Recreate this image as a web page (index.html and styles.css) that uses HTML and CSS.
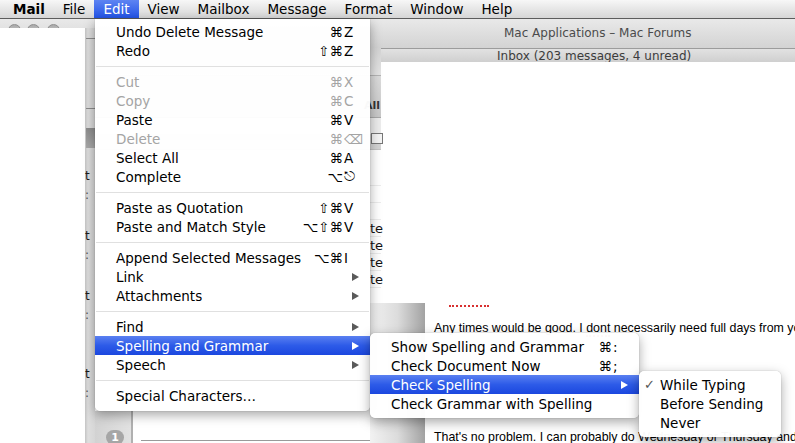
FILE: index.html
```html
<!DOCTYPE html>
<html lang="en">

<head>
    <meta charset="UTF-8">
    <title>Mail - Edit menu</title>
    <link rel="stylesheet" href="styles.css">
</head>

<body>

    <div class="menubar">
        <span class="mb-item app">Mail</span>
        <span class="mb-item">File</span>
        <span class="mb-item active">Edit</span>
        <span class="mb-item">View</span>
        <span class="mb-item">Mailbox</span>
        <span class="mb-item">Message</span>
        <span class="mb-item">Format</span>
        <span class="mb-item">Window</span>
        <span class="mb-item">Help</span>
    </div>

    <!-- windows behind the menus -->
    <div class="desk">
        <div class="titlebar">
            <span class="light l1"></span><span class="light l2"></span><span class="light l3"></span>
            <span class="title">Mac Applications – Mac Forums</span>
        </div>
        <div class="subbar"><span>Inbox (203 messages, 4 unread)</span></div>

        <div class="left-pane"></div>

        <div class="strip">
            <span class="strip-mark m1"></span>
            <span class="strip-mark m2"></span>
            <span class="strip-sel"></span>
            <span class="peek" style="top: 142px">t</span>
            <span class="peek dots" style="top: 161px">:</span>
            <span class="peek" style="top: 202px">t</span>
            <span class="peek dots" style="top: 221px">:</span>
            <span class="peek" style="top: 262px">t</span>
            <span class="peek dots" style="top: 281px">:</span>
            <span class="peek" style="top: 340px">t</span>
            <span class="peek dots" style="top: 359px">:</span>
        </div>

        <div class="list">
            <div class="list-tool"></div>
            <div class="list-band"><span class="all-btn">All</span></div>
            <div class="list-head"><span class="head-box"></span></div>
            <div class="rows">
                <div class="row"></div>
                <div class="row"></div>
                <div class="row"></div>
                <div class="row"><span>te</span></div>
                <div class="row"><span>te</span></div>
                <div class="row"><span>te</span></div>
                <div class="row"><span>te</span></div>
                <div class="row"></div>
            </div>
            <div class="list-foot">
                <div class="box-col"><span class="badge">1</span></div>
                <div class="foot-body"></div>
            </div>
        </div>

        <div class="shade"></div>

        <div class="message">
            <div class="redact"></div>
            <p class="first">Any times would be good. I <span class="typo">dont</span> necessarily need full days from you</p>
            <p class="later">That's no problem. I can probably do Wednesday or Thursday and</p>
        </div>
    </div>

    <!-- Edit menu -->
    <div class="menu edit-menu">
        <div class="item"><span>Undo Delete Message</span><span class="mods">⌘</span><span class="key">Z</span></div>
        <div class="item"><span>Redo</span><span class="mods">⇧⌘</span><span class="key">Z</span></div>
        <div class="sep"></div>
        <div class="item off"><span>Cut</span><span class="mods">⌘</span><span class="key">X</span></div>
        <div class="item off"><span>Copy</span><span class="mods">⌘</span><span class="key">C</span></div>
        <div class="item"><span>Paste</span><span class="mods">⌘</span><span class="key">V</span></div>
        <div class="item off"><span>Delete</span><span class="mods">⌘</span><span class="key">⌫</span></div>
        <div class="item"><span>Select All</span><span class="mods">⌘</span><span class="key">A</span></div>
        <div class="item"><span>Complete</span><span class="mods">⌥</span><span class="key">⎋</span></div>
        <div class="sep"></div>
        <div class="item"><span>Paste as Quotation</span><span class="mods">⇧⌘</span><span class="key">V</span></div>
        <div class="item"><span>Paste and Match Style</span><span class="mods">⌥⇧⌘</span><span class="key">V</span></div>
        <div class="sep"></div>
        <div class="item"><span>Append Selected Messages</span><span class="mods">⌥⌘</span><span class="key">I</span></div>
        <div class="item"><span>Link</span><span class="mods"></span><span class="arrow"></span></div>
        <div class="item"><span>Attachments</span><span class="mods"></span><span class="arrow"></span></div>
        <div class="sep"></div>
        <div class="item"><span>Find</span><span class="mods"></span><span class="arrow"></span></div>
        <div class="item hot"><span>Spelling and Grammar</span><span class="mods"></span><span class="arrow"></span></div>
        <div class="item"><span>Speech</span><span class="mods"></span><span class="arrow"></span></div>
        <div class="sep"></div>
        <div class="item"><span>Special Characters…</span><span class="mods"></span><span class="key"></span></div>
    </div>

    <!-- Spelling and Grammar submenu -->
    <div class="menu spell-menu">
        <div class="item"><span>Show Spelling and Grammar</span><span class="mods">⌘</span><span class="key">:</span></div>
        <div class="item"><span>Check Document Now</span><span class="mods">⌘</span><span class="key">;</span></div>
        <div class="item hot"><span>Check Spelling</span><span class="mods"></span><span class="arrow"></span></div>
        <div class="item"><span>Check Grammar with Spelling</span><span class="mods"></span><span class="key"></span></div>
    </div>

    <!-- Check Spelling submenu -->
    <div class="menu check-menu">
        <div class="item"><span class="tick">✓</span><span>While Typing</span></div>
        <div class="item"><span class="tick"></span><span>Before Sending</span></div>
        <div class="item"><span class="tick"></span><span>Never</span></div>
    </div>

</body>

</html>
```

FILE: styles.css
```css
body {
    margin: 0;
    width: 795px;
    height: 443px;
    overflow: hidden;
    position: relative;
    background-color: #ffffff;
    font-family: "DejaVu Sans", sans-serif;
}

/* menu bar */

.menubar {
    position: relative;
    z-index: 5;
    display: flex;
    height: 18px;
    padding-left: 4px;
    border-bottom: 1px solid #5c5c5c;
    background: linear-gradient(#f7f7f7, #d6d6d6);
    font-size: 13.5px;
    line-height: 18px;
}

.mb-item {
    padding: 0 9px;
    color: #000000;
}

.mb-item.app {
    font-weight: bold;
}

.mb-item.active {
    background: linear-gradient(#5e84f2, #2353e6);
    color: #ffffff;
}

/* background windows */

.desk {
    position: absolute;
    top: 19px;
    left: 0;
    right: 0;
    bottom: 0;
}

.titlebar {
    position: absolute;
    top: 0;
    left: 0;
    right: 0;
    height: 29px;
    border-bottom: 1px solid #9c9c9c;
    background: linear-gradient(#e9e9e9, #d3d3d3);
}

.light {
    position: absolute;
    top: 5px;
    width: 13px;
    height: 13px;
    border-radius: 50%;
    background: linear-gradient(#a9a9a9, #d8d8d8);
    border: 1px solid #8f8f8f;
    box-sizing: border-box;
}

.l1 { left: 8px; }
.l2 { left: 27px; }
.l3 { left: 47px; }

.title {
    position: absolute;
    left: 504px;
    top: 7px;
    font-size: 12px;
    color: #4b4b4b;
}

.subbar {
    position: absolute;
    top: 30px;
    left: 0;
    right: 0;
    height: 13px;
    overflow: hidden;
    background: linear-gradient(#e2e2e2, #cfcfcf);
}

.subbar span {
    position: absolute;
    left: 497px;
    top: 1px;
    font-size: 12px;
    line-height: 13px;
    color: #3c3c3c;
}

.left-pane {
    position: absolute;
    top: 9px;
    left: 0;
    width: 85px;
    bottom: 0;
    background-color: #ffffff;
}

.strip {
    position: absolute;
    top: 9px;
    left: 85px;
    width: 10px;
    bottom: 0;
    background: linear-gradient(to right, #c4c4c4, #dedede 30%, #d6d6d6);
}

.strip-mark {
    position: absolute;
    left: 1px;
    right: 0;
    height: 1px;
    background-color: #8a8a8a;
}

.m1 { top: 10px; }
.m2 { top: 80px; }

.strip-sel {
    position: absolute;
    top: 100px;
    left: 1px;
    right: 0;
    height: 20px;
    background: linear-gradient(#8c8c8c, #a8a8a8);
}

.peek {
    position: absolute;
    left: 0;
    font-size: 12px;
    line-height: 12px;
    color: #1a1a1a;
}

.peek.dots {
    color: #555555;
}

.list {
    position: absolute;
    top: 29px;
    left: 95px;
    width: 286px;
    bottom: 0;
    display: flex;
    flex-direction: column;
    background-color: #ffffff;
}

.list-tool {
    height: 27px;
    background: linear-gradient(#d4d4d4, #e4e4e4);
}

.list-band {
    height: 43px;
    display: flex;
    align-items: flex-end;
    justify-content: flex-end;
    padding-bottom: 5px;
    background: linear-gradient(#dcdcdc, #c8c8c8);
    border-top: 1px solid #b4b4b4;
    border-bottom: 1px solid #a9a9a9;
    box-sizing: border-box;
}

.all-btn {
    font-size: 11px;
    font-weight: bold;
    color: #333333;
    padding-right: 1px;
}

.list-head {
    height: 32px;
    display: flex;
    justify-content: flex-end;
    align-items: flex-end;
    padding-bottom: 5px;
    box-sizing: border-box;
    background: linear-gradient(#ececec 50%, #d4d4d4 50%);
    border-bottom: 1px solid #c4c4c4;
}

.head-box {
    width: 10px;
    height: 9px;
    border: 1px solid #777777;
    background-color: #f4f4f4;
    margin-right: -2px;
}

.rows {
    padding-top: 19px;
}

.row {
    height: 17px;
    border-bottom: 1px solid #ececec;
    box-sizing: border-box;
    display: flex;
    justify-content: flex-end;
    align-items: center;
    font-size: 13px;
    color: #111111;
}

.row span {
    margin-right: -2px;
}

.list-foot {
    margin-top: auto;
    height: 32px;
    display: flex;
}

.box-col {
    width: 36px;
    background: linear-gradient(to right, #d2d2d2, #e2e2e2);
    border-right: 2px solid #b0b0b0;
    position: relative;
}

.badge {
    position: absolute;
    left: 11px;
    top: 19px;
    width: 18px;
    height: 15px;
    border-radius: 8px;
    background-color: #a6a6a6;
    color: #ffffff;
    font-size: 11px;
    font-weight: bold;
    text-align: center;
    line-height: 15px;
}

.foot-body {
    flex: 1;
    border-bottom: 1px solid #9a9a9a;
    margin-bottom: 2px;
    margin-left: 8px;
}

.shade {
    position: absolute;
    top: 284px;
    left: 370px;
    width: 55px;
    bottom: 0;
    background: linear-gradient(to right, #f2f2f2, #dcdcdc 50%, #a2a2a2);
}

.message {
    position: absolute;
    top: 43px;
    left: 425px;
    right: 0;
    bottom: 0;
    padding-left: 9px;
    background-color: #ffffff;
    font-family: "Liberation Sans", Arial, sans-serif;
    font-size: 12.4px;
    color: #000000;
    white-space: nowrap;
    overflow: hidden;
}

.message p {
    margin: 0;
}

.redact {
    margin: 241px 0 0 15px;
    width: 40px;
    height: 2px;
    border-bottom: 2px dotted #d83030;
}

.message .first {
    margin-top: 14px;
}

.typo {
    border-bottom: 2px dotted #d83030;
}

.message .later {
    margin-top: 95px;
}

/* menus */

.menu {
    position: absolute;
    z-index: 10;
    background-color: rgba(255, 255, 255, 0.97);
    box-shadow: 0 4px 12px rgba(0, 0, 0, 0.35), 0 0 1px rgba(0, 0, 0, 0.4);
    font-size: 13.5px;
    color: #000000;
    padding: 4px 0 5px;
}

.edit-menu {
    top: 19px;
    left: 95px;
    width: 275px;
    padding-top: 3px;
    padding-bottom: 6px;
    border-radius: 0 0 5px 5px;
}

.spell-menu {
    top: 333px;
    left: 370px;
    width: 269px;
    border-radius: 5px;
}

.check-menu {
    top: 371px;
    left: 639px;
    width: 142px;
    border-radius: 5px;
}

.item {
    display: grid;
    grid-template-columns: 1fr auto 14px;
    align-items: center;
    height: 19px;
    padding: 0 12px 0 21px;
    white-space: nowrap;
}

.mods {
    text-align: right;
    padding-right: 1px;
}

.item.off {
    color: #a4a4a4;
}

.item.hot {
    background: linear-gradient(#5a80f1, #2d5be8 50%, #1b47df);
    color: #ffffff;
}

.arrow {
    justify-self: end;
    width: 0;
    height: 0;
    margin-right: -1px;
    border-left: 7px solid #5a5a5a;
    border-top: 4.5px solid transparent;
    border-bottom: 4.5px solid transparent;
}

.item.hot .arrow {
    border-left-color: #ffffff;
}

.sep {
    height: 12px;
    display: flex;
    align-items: center;
}

.sep::after {
    content: "";
    flex: 1;
    height: 1px;
    margin: 0 1px;
    background-color: #e0e0e0;
}

.check-menu .item {
    grid-template-columns: 16px 1fr;
    padding: 0 8px 0 5px;
}

.tick {
    color: #555555;
    font-size: 13px;
}
```
